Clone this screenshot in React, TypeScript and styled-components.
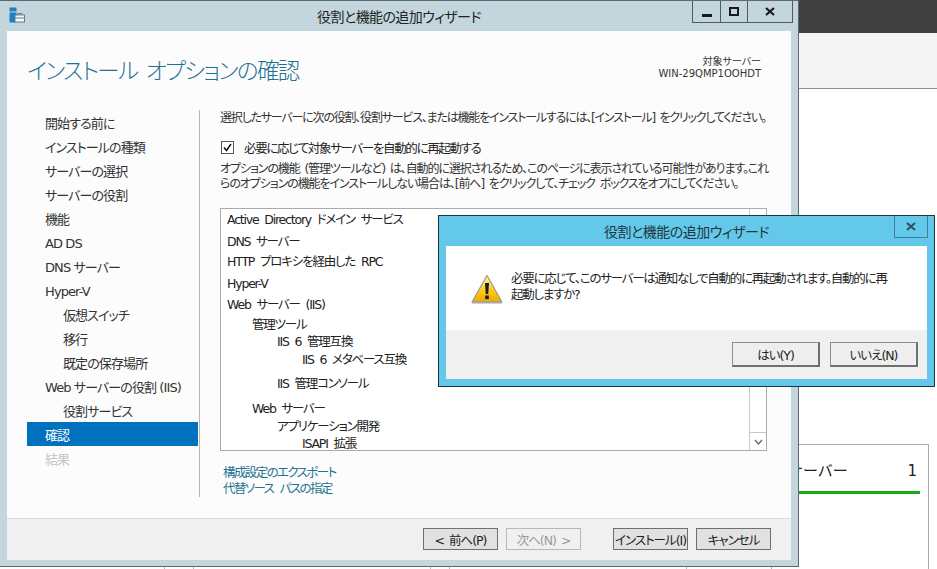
import React from 'react';
import styled, { createGlobalStyle } from 'styled-components';

const FONT = '"DejaVu Sans", "Noto Sans CJK JP", sans-serif';

const GlobalStyle = createGlobalStyle`
  html, body {
    margin: 0;
    padding: 0;
    width: 937px;
    height: 569px;
    overflow: hidden;
    background: #fff;
    font-family: ${FONT};
    font-feature-settings: "palt";
  }
`;

const Desktop = styled.div`
  position: relative;
  width: 937px;
  height: 569px;
  overflow: hidden;
`;

/* server manager window behind the wizard */
const BackWindow = styled.div`
  display: flex;
  flex-direction: column;
  height: 569px;
`;

const DarkBar = styled.div`
  height: 33px;
  background: #404040;
`;

const Ribbon = styled.div`
  height: 55px;
  background: #f5f5f5;
  border-bottom: 1px solid #8f8f8f;
`;

const BackBody = styled.div`
  flex: 1;
  display: flex;
  justify-content: flex-end;
  padding: 355px 8px 0 0;
  background: #fff;
`;

const Tile = styled.div`
  width: 132px;
  border: 1px solid #ababab;
  border-bottom: none;
  padding: 14px 8px 0 16px;
  background: #fff;
`;

const TileHead = styled.div`
  display: flex;
  justify-content: space-between;
  padding-right: 3px;
  font-size: 15px;
  line-height: 24px;
  font-feature-settings: normal;
  color: #222;
`;

const GreenBar = styled.div`
  height: 3px;
  margin-top: 8px;
  background: #13ad13;
`;

const TileGrid = styled.div`
  position: absolute;
  left: 164px;
  top: 567px;
  display: flex;
  height: 2px;
`;

const GridCell = styled.div<{ $w: number }>`
  width: ${p => p.$w}px;
  border-left: 1px solid #b5b5b5;
`;

/* wizard window */
const Wizard = styled.div`
  position: absolute;
  left: 0;
  top: 0;
  width: 799px;
  height: 567px;
  box-sizing: border-box;
  display: flex;
  flex-direction: column;
  background: #c3d6dd;
  border-top: 1px solid #5d6a70;
  border-right: 1px solid #5d6a70;
  border-bottom: 1px solid #5d6a70;
`;

const TitleBar = styled.div`
  position: relative;
  flex: none;
  height: 30px;
  display: flex;
  align-items: center;
  justify-content: center;
  padding-bottom: 1px;
  box-sizing: border-box;
  font-size: 14px;
  letter-spacing: -0.6px;
  color: #222;
`;

const AppIcon = styled.svg`
  position: absolute;
  left: 9px;
  top: 6px;
`;

const WinControls = styled.div`
  position: absolute;
  left: 692px;
  top: 0;
  height: 21px;
  display: flex;
  border: 1px solid #4d5c63;
  border-top: none;
`;

const WinControl = styled.div<{ $w: number }>`
  width: ${p => p.$w}px;
  display: flex;
  align-items: center;
  justify-content: center;
  & + & {
    border-left: 1px solid #4d5c63;
  }
`;

const Client = styled.div`
  flex: 1;
  display: flex;
  flex-direction: column;
  margin: 0 7px 7px 7px;
  background: #fcfcfc;
`;

const Header = styled.div`
  flex: none;
  height: 79px;
  display: flex;
  justify-content: space-between;
  padding: 0 30px 0 20px;
`;

const PageTitle = styled.div`
  margin-top: 21px;
  font-size: 22.5px;
  line-height: 34px;
  font-weight: 300;
  letter-spacing: -1.6px;
  word-spacing: 5px;
  font-family: "Noto Sans CJK JP", sans-serif;
  color: #1c7293;
`;

const Target = styled.div`
  margin-top: 25px;
  text-align: right;
  font-size: 10px;
  line-height: 12px;
  color: #333;
`;

const Body = styled.div`
  flex: 1;
  display: flex;
  min-height: 0;
  padding: 0 0 21px 20px;
`;

const Sidebar = styled.div`
  flex: none;
  width: 172px;
  border-right: 1px solid #b5b5b5;
  box-sizing: content-box;
`;

const NavItem = styled.div<{ $indent?: boolean; $active?: boolean; $muted?: boolean }>`
  width: 171px;
  height: 24px;
  box-sizing: border-box;
  padding-left: ${p => (p.$indent ? 36 : 18)}px;
  font-size: 13px;
  line-height: 27px;
  letter-spacing: -0.9px;
  white-space: nowrap;
  background: ${p => (p.$active ? '#0071bc' : 'transparent')};
  color: ${p => (p.$active ? '#fff' : p.$muted ? '#c4c4c4' : '#333')};
`;

const Content = styled.div`
  flex: 1;
  display: flex;
  flex-direction: column;
  padding: 0 24px 0 20px;
  min-width: 0;
`;

const Lead = styled.div`
  font-size: 12px;
  line-height: 17px;
  letter-spacing: -1.2px;
  word-spacing: 2px;
  white-space: nowrap;
  color: #333;
`;

const CheckRow = styled.label`
  display: flex;
  align-items: center;
  margin: 12px 0 0 1px;
  height: 16px;
  font-size: 12.5px;
  letter-spacing: -1.35px;
  color: #222;
`;

const CheckBox = styled.span`
  width: 11px;
  height: 11px;
  border: 1px solid #555;
  margin-right: 10px;
  display: flex;
  align-items: center;
  justify-content: center;
  background: #fff;
`;

const Note = styled.div`
  margin-top: 7px;
  font-size: 12px;
  line-height: 15px;
  letter-spacing: -1.08px;
  word-spacing: 2px;
  white-space: nowrap;
  color: #333;
`;

const ListBox = styled.div`
  margin-top: 16px;
  height: 243px;
  box-sizing: border-box;
  display: flex;
  border: 1px solid #ababab;
  background: #fff;
`;

const ListRows = styled.div`
  flex: 1;
  overflow: hidden;
  padding-top: 4px;
`;

const ListRow = styled.div<{ $level: number; $gap: number }>`
  height: 13px;
  line-height: 13px;
  margin-bottom: ${p => p.$gap}px;
  padding-left: ${p => 6 + p.$level * 25}px;
  font-size: 12.5px;
  letter-spacing: -1.2px;
  word-spacing: 3px;
  white-space: nowrap;
  color: #222;
`;

const ScrollBar = styled.div`
  flex: none;
  width: 16px;
  display: flex;
  flex-direction: column;
  justify-content: space-between;
  border-left: 1px solid #c8c8c8;
  background: #fff;
`;

const ScrollEnd = styled.div<{ $bottom?: boolean }>`
  height: 17px;
  display: flex;
  align-items: center;
  justify-content: center;
  border-${p => (p.$bottom ? 'top' : 'bottom')}: 1px solid #c8c8c8;
`;

const Links = styled.div`
  margin: 14px 0 0 3px;
  font-size: 12.5px;
  line-height: 16px;
  letter-spacing: -1.6px;
  word-spacing: 4px;
  color: #1b7490;
`;

const Footer = styled.div`
  flex: none;
  height: 42px;
  box-sizing: border-box;
  display: flex;
  align-items: flex-start;
  padding: 9px 20px 0 0;
  justify-content: flex-end;
  background: #f0f0f0;
  border-top: 1px solid #dcdcdc;
`;

const Button = styled.div<{ $off?: boolean; $gap?: number; $w?: number }>`
  width: ${p => p.$w ?? 75}px;
  height: 22px;
  box-sizing: border-box;
  margin-left: ${p => p.$gap ?? 0}px;
  display: flex;
  align-items: center;
  justify-content: center;
  font-size: 12.5px;
  letter-spacing: -1px;
  word-spacing: 2px;
  white-space: nowrap;
  background: ${p => (p.$off ? '#f0f0f0' : '#e1e1e1')};
  border: 1px solid ${p => (p.$off ? '#b8b8b8' : '#6f6f6f')};
  color: ${p => (p.$off ? '#9a9a9a' : '#222')};
`;

/* confirmation dialog */
const Dialog = styled.div`
  position: absolute;
  left: 438px;
  top: 215px;
  width: 497px;
  height: 172px;
  box-sizing: border-box;
  display: flex;
  flex-direction: column;
  padding: 0 7px 7px 7px;
  background: #63c8e9;
  border: 1px solid #20343c;
`;

const DialogTitle = styled.div`
  position: relative;
  flex: none;
  height: 30px;
  display: flex;
  align-items: center;
  justify-content: center;
  font-size: 14px;
  letter-spacing: -0.5px;
  color: #22363e;
`;

const CloseBox = styled.div`
  position: absolute;
  right: -1px;
  top: 0;
  width: 32px;
  height: 21px;
  display: flex;
  align-items: center;
  justify-content: center;
  border: 1px solid #3f7f97;
  border-top: none;
`;

const DialogMessage = styled.div`
  flex: 1;
  display: flex;
  align-items: flex-start;
  padding: 25px 30px 0 25px;
  background: #fff;
`;

const WarnIcon = styled.svg`
  flex: none;
  margin: 3px 8px 0 0;
`;

const MessageText = styled.div`
  font-size: 12.5px;
  line-height: 16px;
  letter-spacing: -1.25px;
  white-space: nowrap;
  color: #222;
`;

const DialogFooter = styled.div`
  flex: none;
  height: 49px;
  box-sizing: border-box;
  display: flex;
  justify-content: flex-end;
  padding: 12px 9px 0 0;
  background: #f0f0f0;
`;

const DialogButton = styled(Button)`
  height: 25px;
  border-width: 1px 2px 2px 1px;
  border-color: #8e8e8e #6f6f6f #6f6f6f #8e8e8e;
  background: #eeeeee;
`;

const NAV: { label: string; indent?: boolean; active?: boolean; muted?: boolean }[] = [
  { label: '開始する前に' },
  { label: 'インストールの種類' },
  { label: 'サーバーの選択' },
  { label: 'サーバーの役割' },
  { label: '機能' },
  { label: 'AD DS' },
  { label: 'DNS サーバー' },
  { label: 'Hyper-V' },
  { label: '仮想スイッチ', indent: true },
  { label: '移行', indent: true },
  { label: '既定の保存場所', indent: true },
  { label: 'Web サーバーの役割 (IIS)' },
  { label: '役割サービス', indent: true },
  { label: '確認', active: true },
  { label: '結果', muted: true },
];

const ROWS: { text: string; level: number; gap: number }[] = [
  { text: 'Active Directory ドメイン サービス', level: 0, gap: 9 },
  { text: 'DNS サーバー', level: 0, gap: 7 },
  { text: 'HTTP プロキシを経由した RPC', level: 0, gap: 9 },
  { text: 'Hyper-V', level: 0, gap: 8 },
  { text: 'Web サーバー (IIS)', level: 0, gap: 7 },
  { text: '管理ツール', level: 1, gap: 4 },
  { text: 'IIS 6 管理互換', level: 2, gap: 5 },
  { text: 'IIS 6 メタベース互換', level: 3, gap: 11 },
  { text: 'IIS 管理コンソール', level: 2, gap: 12 },
  { text: 'Web サーバー', level: 1, gap: 5 },
  { text: 'アプリケーション開発', level: 2, gap: 4 },
  { text: 'ISAPI 拡張', level: 3, gap: 0 },
];

export default function App() {
  return (
    <Desktop>
      <GlobalStyle />
      <BackWindow>
        <DarkBar />
        <Ribbon />
        <BackBody>
          <Tile>
            <TileHead>
              <span>サーバー</span>
              <span>1</span>
            </TileHead>
            <GreenBar />
          </Tile>
        </BackBody>
      </BackWindow>
      <TileGrid>
        <GridCell $w={28} />
        <GridCell $w={236} />
        <GridCell $w={18} />
        <GridCell $w={236} />
        <GridCell $w={16} />
      </TileGrid>

      <Wizard>
        <TitleBar>
          <AppIcon width="16" height="16" viewBox="0 0 16 16">
            <rect x="0.5" y="0.5" width="7" height="4" fill="#1f7fc4" />
            <rect x="0.5" y="5.5" width="7" height="10" fill="#1f7fc4" />
            <rect x="6" y="8" width="9.5" height="7" fill="#f4f8fa" stroke="#5f7f8f" />
            <path d="M8.5 8V6.5h4.5V8M6 11h9.5" fill="none" stroke="#5f7f8f" />
          </AppIcon>
          役割と機能の追加ウィザード
          <WinControls>
            <WinControl $w={27}>
              <svg width="10" height="10"><rect x="0" y="7" width="10" height="3" fill="#1a1a1a" /></svg>
            </WinControl>
            <WinControl $w={26}>
              <svg width="10" height="9"><rect x="1" y="1" width="8" height="7" fill="none" stroke="#1a1a1a" strokeWidth="2" /></svg>
            </WinControl>
            <WinControl $w={44}>
              <svg width="10" height="9"><path d="M1 1l8 7M9 1L1 8" stroke="#1a1a1a" strokeWidth="2.2" /></svg>
            </WinControl>
          </WinControls>
        </TitleBar>
        <Client>
          <Header>
            <PageTitle>インストール オプションの確認</PageTitle>
            <Target>
              対象サーバー
              <br />
              WIN-29QMP1OOHDT
            </Target>
          </Header>
          <Body>
            <Sidebar>
              {NAV.map(n => (
                <NavItem key={n.label} $indent={n.indent} $active={n.active} $muted={n.muted}>
                  {n.label}
                </NavItem>
              ))}
            </Sidebar>
            <Content>
              <Lead>選択したサーバーに次の役割、役割サービス、または機能をインストールするには、[インストール] をクリックしてください。</Lead>
              <CheckRow>
                <CheckBox>
                  <svg width="9" height="9" viewBox="0 0 9 9"><path d="M1 4.5l2.5 3L8 1" fill="none" stroke="#111" strokeWidth="1.6" /></svg>
                </CheckBox>
                必要に応じて対象サーバーを自動的に再起動する
              </CheckRow>
              <Note>
                オプションの機能 (管理ツールなど) は、自動的に選択されるため、このページに表示されている可能性があります。これ
                <br />
                らのオプションの機能をインストールしない場合は、[前へ] をクリックして、チェック ボックスをオフにしてください。
              </Note>
              <ListBox>
                <ListRows>
                  {ROWS.map(r => (
                    <ListRow key={r.text} $level={r.level} $gap={r.gap}>
                      {r.text}
                    </ListRow>
                  ))}
                </ListRows>
                <ScrollBar>
                  <ScrollEnd>
                    <svg width="9" height="6"><path d="M1 5l3.5-4L8 5" fill="none" stroke="#666" strokeWidth="1.3" /></svg>
                  </ScrollEnd>
                  <ScrollEnd $bottom>
                    <svg width="9" height="6"><path d="M1 1l3.5 4L8 1" fill="none" stroke="#666" strokeWidth="1.3" /></svg>
                  </ScrollEnd>
                </ScrollBar>
              </ListBox>
              <Links>
                構成設定のエクスポート
                <br />
                代替ソース パスの指定
              </Links>
            </Content>
          </Body>
          <Footer>
            <Button>&lt; 前へ(P)</Button>
            <Button $off $gap={8}>次へ(N) &gt;</Button>
            <Button $gap={32}>インストール(I)</Button>
            <Button $gap={8}>キャンセル</Button>
          </Footer>
        </Client>
      </Wizard>

      <Dialog>
        <DialogTitle>
          役割と機能の追加ウィザード
          <CloseBox>
            <svg width="10" height="9"><path d="M1 1l8 7M9 1L1 8" stroke="#2f4f5c" strokeWidth="2" /></svg>
          </CloseBox>
        </DialogTitle>
        <DialogMessage>
          <WarnIcon width="32" height="30" viewBox="0 0 32 30">
            <defs>
              <linearGradient id="warnFill" x1="0" y1="0" x2="0" y2="1">
                <stop offset="0" stopColor="#fff3a8" />
                <stop offset="0.6" stopColor="#fbc91a" />
                <stop offset="1" stopColor="#f0a800" />
              </linearGradient>
            </defs>
            <path d="M16 1.5L31 28H1z" fill="url(#warnFill)" stroke="#9a9a8a" strokeWidth="1.2" strokeLinejoin="round" />
            <rect x="1" y="27.5" width="30" height="2" fill="#a8a8a8" />
            <path d="M14 9h4l-.8 11h-2.4z" fill="#1a1a1a" />
            <rect x="14.2" y="21.5" width="3.6" height="3.6" fill="#1a1a1a" />
          </WarnIcon>
          <MessageText>
            必要に応じて、このサーバーは通知なしで自動的に再起動されます。自動的に再
            <br />
            起動しますか?
          </MessageText>
        </DialogMessage>
        <DialogFooter>
          <DialogButton $w={88}>はい(Y)</DialogButton>
          <DialogButton $w={88} $gap={10}>いいえ(N)</DialogButton>
        </DialogFooter>
      </Dialog>
    </Desktop>
  );
}
